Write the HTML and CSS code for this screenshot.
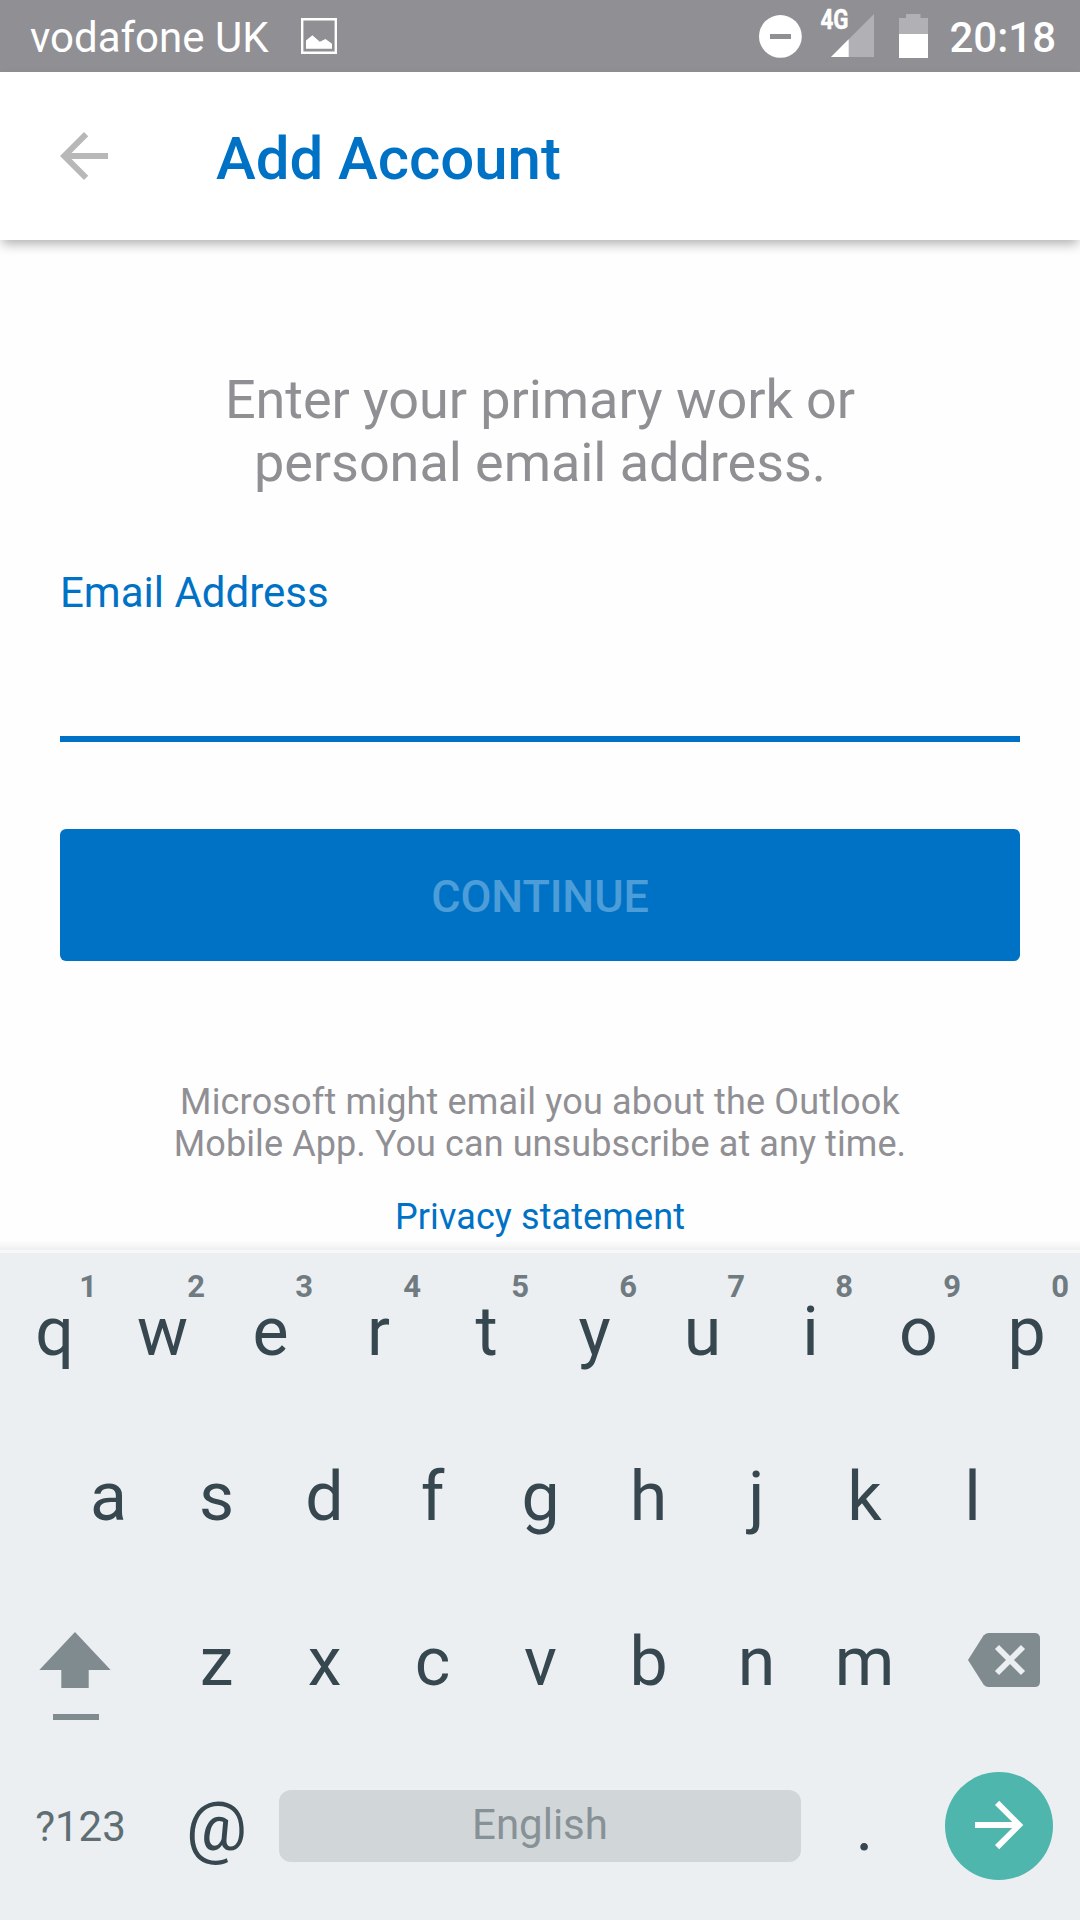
FILE: index.html
```html
<!DOCTYPE html>
<html lang="en">
<head>
<meta charset="utf-8">
<title>Add Account</title>
<link rel="stylesheet" href="styles.css">
</head>
<body>
<div class="screen">
  <header class="status">
    <span class="carrier">vodafone UK</span>
    <svg class="photo" width="36" height="36" viewBox="0 0 36 36">
      <path d="M1.2 1.2H34.8V34.8H1.2Z" fill="none" stroke="#fff" stroke-width="2.4"/>
      <path d="M5 30.7V22.5L11.4 17.2L18.8 23.8L24.5 21L31 25.7V30.7Z" fill="#fff"/>
    </svg>
    <svg class="indicators" width="190" height="72" viewBox="0 0 190 72">
      <circle cx="21.4" cy="36.4" r="21.4" fill="#fff"/>
      <path d="M11 34H32V39H11Z" fill="#908f94"/>
      <path d="M72 57L115 14V57Z" fill="#b1b0b5"/>
      <path d="M72 57L89.7 39.3V57Z" fill="#fff"/>
      <text class="network" x="61.5" y="29.3" textLength="28" lengthAdjust="spacingAndGlyphs">4G</text>
      <path d="M140 34V18H147V14H161.500V18H169V34Z" fill="#b1b0b5"/>
      <path d="M140 34H169V58H140Z" fill="#fff"/>
    </svg>
    <span class="time">20:18</span>
  </header>

  <div class="appbar">
    <svg class="back" width="72" height="72" viewBox="0 0 24 24">
      <path d="M20 11H7.83l5.59-5.59L12 4l-8 8 8 8 1.410-1.410L7.830 13H20v-2z" fill="#b8b8b8"/>
    </svg>
    <h1 class="title">Add Account</h1>
  </div>

  <main class="content">
    <p class="prompt">Enter your primary work or<br>personal email address.</p>
    <div class="label">Email Address</div>
    <div class="field"></div>
    <button class="continue">CONTINUE</button>
    <p class="notice"><span class="lead">Microsoft might email you about the Outlook</span><br>Mobile App. You can unsubscribe at any time.</p>
    <a class="privacy">Privacy statement</a>
  </main>

  <div class="edge"></div>
  <section class="keyboard">
    <div class="row">
      <span class="key">q<sup class="alt">1</sup></span><span class="key">w<sup class="alt">2</sup></span><span class="key">e<sup class="alt">3</sup></span><span class="key">r<sup class="alt">4</sup></span><span class="key">t<sup class="alt">5</sup></span><span class="key">y<sup class="alt">6</sup></span><span class="key">u<sup class="alt">7</sup></span><span class="key">i<sup class="alt">8</sup></span><span class="key">o<sup class="alt">9</sup></span><span class="key">p<sup class="alt">0</sup></span>
    </div>
    <div class="row">
      <span class="key">a</span><span class="key">s</span><span class="key">d</span><span class="key">f</span><span class="key">g</span><span class="key">h</span><span class="key">j</span><span class="key">k</span><span class="key">l</span>
    </div>
    <div class="row">
      <svg class="wide" width="162" height="165" viewBox="0 0 162 165">
        <path d="M75 49L110.700 87H88.700V105H61.300V87H39.300ZM53 131H99V137H53Z" fill="#808b8f"/>
      </svg>
      <span class="key">z</span><span class="key">x</span><span class="key">c</span><span class="key">v</span><span class="key">b</span><span class="key">n</span><span class="key">m</span>
      <svg class="wide" width="162" height="165" viewBox="918 0 162 165">
        <path d="M968 77L983.500 52.600Q985.700 50 988.500 50H1034.500Q1040 50 1040 55.500V98.500Q1040 104 1034.500 104H988.500Q985.700 104 983.500 101.400Z" fill="#808b8f"/>
        <path d="M997 64L1023 90M1023 64L997 90" stroke="#eceff1" stroke-width="5.800"/>
      </svg>
    </div>
    <div class="row">
      <span class="symbols">?123</span>
      <span class="key">@</span>
      <span class="space">English</span>
      <span class="key period">.</span>
      <svg class="send" width="108" height="108" viewBox="0 0 108 108">
        <circle cx="54" cy="54" r="54" fill="#4eb6ac"/>
        <path d="M30 50H67.200L50 33L54.200 28.800L78.300 53L54.200 77.200L50 73L67.200 56H30Z" fill="#fff"/>
      </svg>
    </div>
  </section>
</div>
</body>
</html>
```
FILE: styles.css
```css
* { box-sizing: border-box; margin: 0; padding: 0; }

body {
  width: 1080px;
  height: 1920px;
  overflow: hidden;
  background: #fefefe;
  font-family: Roboto, sans-serif;
}

.screen {
  display: flex;
  flex-direction: column;
  height: 1920px;
}

.status {
  display: flex;
  height: 72px;
  padding: 0 24px 0 30px;
  background: #908f94;
  color: #fff;
  font-size: 42px;
  line-height: 75px;
}

.photo { margin: 18px 0 0 32px; }
.indicators { margin-left: auto; }
.network { font: 700 27px Roboto, sans-serif; fill: #fff; stroke: #fff; stroke-width: 0.5px; }
.time { width: 107px; font-weight: 500; text-align: right; white-space: nowrap; }

.appbar {
  display: flex;
  align-items: center;
  height: 168px;
  padding-left: 48px;
  background: #fff;
  box-shadow: 0 6px 11px -2px rgba(0, 0, 0, 0.31);
  z-index: 1;
}

.title {
  margin-left: 96px;
  padding-top: 5px;
  color: #0072c6;
  font-size: 60px;
  font-weight: 500;
  line-height: 72px;
  letter-spacing: -0.06px;
}

.content {
  display: flex;
  flex-direction: column;
  height: 1000px;
  padding: 128px 60px 0;
  color: #908f94;
  text-align: center;
}

.prompt { font-size: 54px; line-height: 63px; letter-spacing: -0.06px; }

.label {
  margin-top: 74px;
  color: #0072c6;
  font-size: 42px;
  line-height: 50px;
  text-align: left;
}

.field {
  height: 124px;
  border-bottom: 6px solid #0072c6;
}

.continue {
  height: 132px;
  margin-top: 87px;
  border: 0;
  border-radius: 6px;
  background: #0072c6;
  color: #4d9dd8;
  font: 500 45px Roboto, sans-serif;
  letter-spacing: -0.15px;
  padding-top: 3px;
}

.notice { margin-top: 120px; font-size: 36px; line-height: 42px; letter-spacing: 0.09px; }
.lead { letter-spacing: 0.17px; }

.privacy {
  margin-top: 31px;
  color: #0072c6;
  font-size: 36px;
  line-height: 42px;
  letter-spacing: 0.1px;
}

.edge {
  height: 13px;
  border-bottom: 3px solid #f6f8f9;
  background: linear-gradient(rgba(0, 0, 0, 0), rgba(0, 0, 0, 0.06));
}

.keyboard {
  height: 667px;
  background: #eceff1;
  color: #37474f;
}

.row {
  display: flex;
  justify-content: center;
  height: 165px;
}

.key {
  position: relative;
  width: 108px;
  padding-left: 1px;
  font-size: 68px;
  line-height: 159px;
  text-align: center;
}

.alt {
  position: absolute;
  top: 16px;
  right: 11px;
  color: #6f7b80;
  font-size: 31px;
  font-weight: 700;
  line-height: 36px;
}

.symbols {
  width: 162px;
  padding-right: 1px;
  color: #5f6e74;
  font-size: 42px;
  line-height: 157px;
  text-align: center;
}

.space {
  width: 522px;
  height: 72px;
  margin: 42px 9px 0;
  border-radius: 12px;
  background: #d1d6d9;
  color: #879196;
  font-size: 42px;
  line-height: 70px;
  text-align: center;
}

.send { margin: 24px 27px 0; }
```
